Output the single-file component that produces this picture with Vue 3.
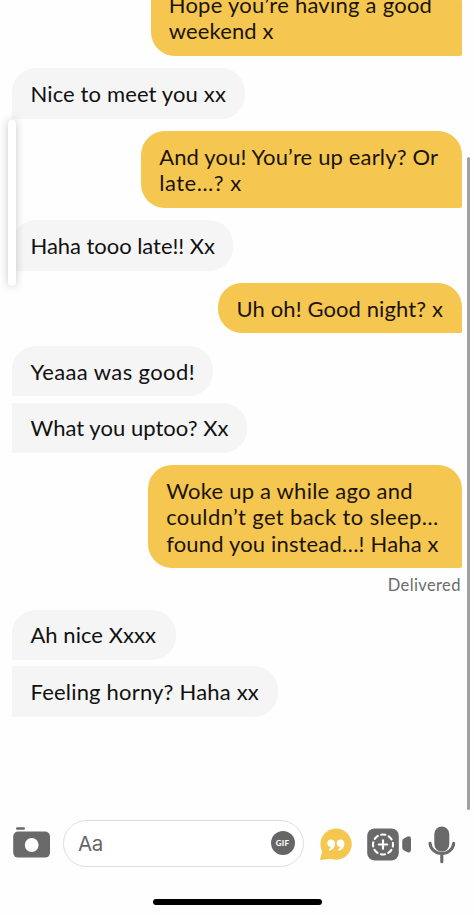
<script setup>
import { ref, onMounted } from 'vue'

const messages = [
  { from: 'me', w: 311.5, lines: [['Hope you’re having a good', 263.5], ['weekend x', 105]] },
  { from: 'them', w: 232.5, lines: [['Nice to meet you xx', 195.5]] },
  { from: 'me', w: 321, lines: [['And you! You’re up early? Or', 279], ['late…? x', 82.5]] },
  { from: 'them', w: 221, lines: [['Haha tooo late!! Xx', 184.5]] },
  { from: 'me', w: 243.7, lines: [['Uh oh! Good night? x', 206.5]] },
  { from: 'them', w: 200.3, lines: [['Yeaaa was good!', 164.5]] },
  { from: 'them', joined: true, w: 235.2, lines: [['What you uptoo? Xx', 198]] },
  { from: 'me', w: 314, status: 'Delivered', lines: [['Woke up a while ago and', 246.5], ['couldn’t get back to sleep…', 272.5], ['found you instead…! Haha x', 272.5]] },
  { from: 'them', w: 163.6, lines: [['Ah nice Xxxx', 125.5]] },
  { from: 'them', joined: true, w: 265.5, lines: [['Feeling horny? Haha xx', 228.5]] },
]

// Track each line so that it fills its measured width.
const root = ref(null)
onMounted(() => {
  root.value.querySelectorAll('[data-fit]').forEach((el) => {
    const natural = el.getBoundingClientRect().width
    const target = Number(el.dataset.fit)
    el.style.letterSpacing = (target - natural) / el.textContent.length + 'px'
  })
})
</script>

<template>
  <main ref="root" class="screen">
    <section class="thread">
      <div v-for="(m, i) in messages" :key="i" class="row" :class="[m.from, { joined: m.joined }]">
        <div class="bubble" :style="{ width: m.w + 'px' }">
          <div v-for="(l, j) in m.lines" :key="j" class="line"><span :data-fit="l[1]">{{ l[0] }}</span></div>
        </div>
        <div v-if="m.status" class="status"><span data-fit="73">{{ m.status }}</span></div>
      </div>
    </section>

    <footer class="composer">
      <svg class="camera" width="38" height="32" viewBox="0 0 38 32">
        <rect x="3" y="0.3" width="9" height="2.4" rx="1.2" fill="#696969" />
        <rect x="0.2" y="4.6" width="36.8" height="26" rx="5" fill="#696969" />
        <circle cx="18.7" cy="18" r="6.9" fill="#fff" />
      </svg>
      <div class="field">
        <span class="placeholder">Aa</span>
        <span class="gif">GIF</span>
      </div>
      <svg class="quote" width="32" height="33" viewBox="0 0 32 33">
        <path d="M16.1.6a15.6 15.6 0 1 1-5.7 30.1L1.4 32C.4 32.1 0 31.4.3 30.5L2.200 23.500A15.600 15.600 0 0 1 16.100.6Z" fill="#f5c74e" />
        <g fill="#fff">
          <path d="M11.200 11.500a3.800 3.800 0 0 1 3.800 4c0 3.600-2 6.200-4.700 7.100-1.200.4-2-.9-1.100-1.700 1-.8 1.500-1.200 1.700-2a3.700 3.700 0 0 1 .3-7.400Z" />
          <path d="M20.600 11.500a3.800 3.800 0 0 1 3.800 4c0 3.600-2 6.200-4.700 7.100-1.200.4-2-.9-1.100-1.700 1-.8 1.500-1.200 1.700-2a3.700 3.700 0 0 1 .3-7.400Z" />
        </g>
      </svg>
      <svg class="video" width="45" height="33" viewBox="0 0 45 33">
        <rect x="0.2" y="0.4" width="31.6" height="32" rx="7.5" fill="#696969" />
        <path d="M35.2 13.4Q35.2 11.4 37 10.6L40.6 8.6Q44 7.4 44 11V21.8Q44 25.2 40.6 24.2L37 22.4Q35.2 21.6 35.2 19.6Z" fill="#696969" />
        <circle cx="16" cy="16.5" r="10" fill="none" stroke="#fff" stroke-width="2.1" stroke-linecap="round" stroke-dasharray="4.3 3.554" stroke-dashoffset="2.15" />
        <path d="M16 12.3v8.4M11.8 16.5h8.4" stroke="#fff" stroke-width="2.2" stroke-linecap="round" />
      </svg>
      <svg class="mic" width="28" height="38" viewBox="0 0 28 38">
        <rect x="6.3" y="0.6" width="15" height="25" rx="7.5" fill="#696969" />
        <path d="M2 17.3a11.900 11.300 0 0 0 23.700 0M13.800 28.300v7.500" fill="none" stroke="#696969" stroke-width="3.100" stroke-linecap="round" />
      </svg>
    </footer>

    <div class="home"></div>
    <div class="edge-handle"></div>
    <div class="scrollbar"></div>
  </main>
</template>

<style>
body {
  margin: 0;
  background: #fefefe;
}
</style>

<style scoped>
.screen {
  position: relative;
  display: flex;
  flex-direction: column;
  width: 474px;
  height: 915px;
  overflow: hidden;
  background: #fefefe;
  font-family: Lato, 'Liberation Sans', sans-serif;
}
.thread {
  display: flex;
  flex-direction: column;
  justify-content: flex-end;
  flex: none;
  box-sizing: border-box;
  height: 716.5px;
  padding: 0 12px 0 12.3px;
}
.row {
  display: flex;
  flex: none;
  flex-direction: column;
  align-items: flex-start;
  margin-top: 12.5px;
}
.row.me {
  align-items: flex-end;
}
.row.joined {
  margin-top: 6.4px;
}
.bubble {
  box-sizing: border-box;
  padding: 12.8px 0 11.2px 18.2px;
  border-radius: 24px 24px 24px 2px;
  background: #f5f5f5;
  color: #111;
  font-size: 22px;
  line-height: 26.3px;
  white-space: nowrap;
}
.me .bubble {
  border-radius: 24px 24px 2px 24px;
  background: #f5c751;
  color: #1b1407;
}
.joined .bubble {
  border-radius: 2px 24px 24px 2px;
}
.status {
  height: 21.9px;
  padding: 7px 1.2px 0 0;
  color: #6b6b6b;
  font-size: 16.5px;
  line-height: 21px;
}
.composer {
  display: flex;
  flex: none;
  align-items: flex-start;
  height: 50px;
  margin-top: 103px;
  padding-left: 13px;
}
.camera {
  margin-top: 7px;
}
.field {
  display: flex;
  align-items: center;
  justify-content: space-between;
  box-sizing: border-box;
  width: 241px;
  height: 47px;
  margin: 0 0 0 12px;
  padding: 0 8.5px 0 14px;
  border: 1.5px solid #dedede;
  border-radius: 24px;
  background: #fff;
}
.placeholder {
  color: #666;
  font-family: Inter, sans-serif;
  font-size: 20.5px;
  letter-spacing: -0.5px;
}
.gif {
  width: 24px;
  height: 24px;
  border-radius: 50%;
  background: #666;
  color: #fff;
  font-size: 8px;
  font-weight: 900;
  line-height: 24px;
  text-align: center;
  letter-spacing: 0.3px;
}
.quote {
  margin: 8px 0 0 15.5px;
}
.video {
  margin: 8px 0 0 15.5px;
}
.mic {
  margin: 6px 0 0 16px;
}
.home {
  flex: none;
  width: 169px;
  height: 6px;
  margin: 29.5px 0 0 152.5px;
  border-radius: 3px;
  background: #000;
}
.edge-handle {
  position: absolute;
  top: 120px;
  left: 7.5px;
  width: 8px;
  height: 166px;
  border-radius: 4px;
  background: #fff;
  box-shadow: 0 0 9px rgba(0, 0, 0, 0.22);
}
.scrollbar {
  position: absolute;
  top: 157px;
  left: 466.7px;
  width: 3.5px;
  height: 653px;
  border-radius: 2px;
  background: #a0a0a0;
}
</style>
